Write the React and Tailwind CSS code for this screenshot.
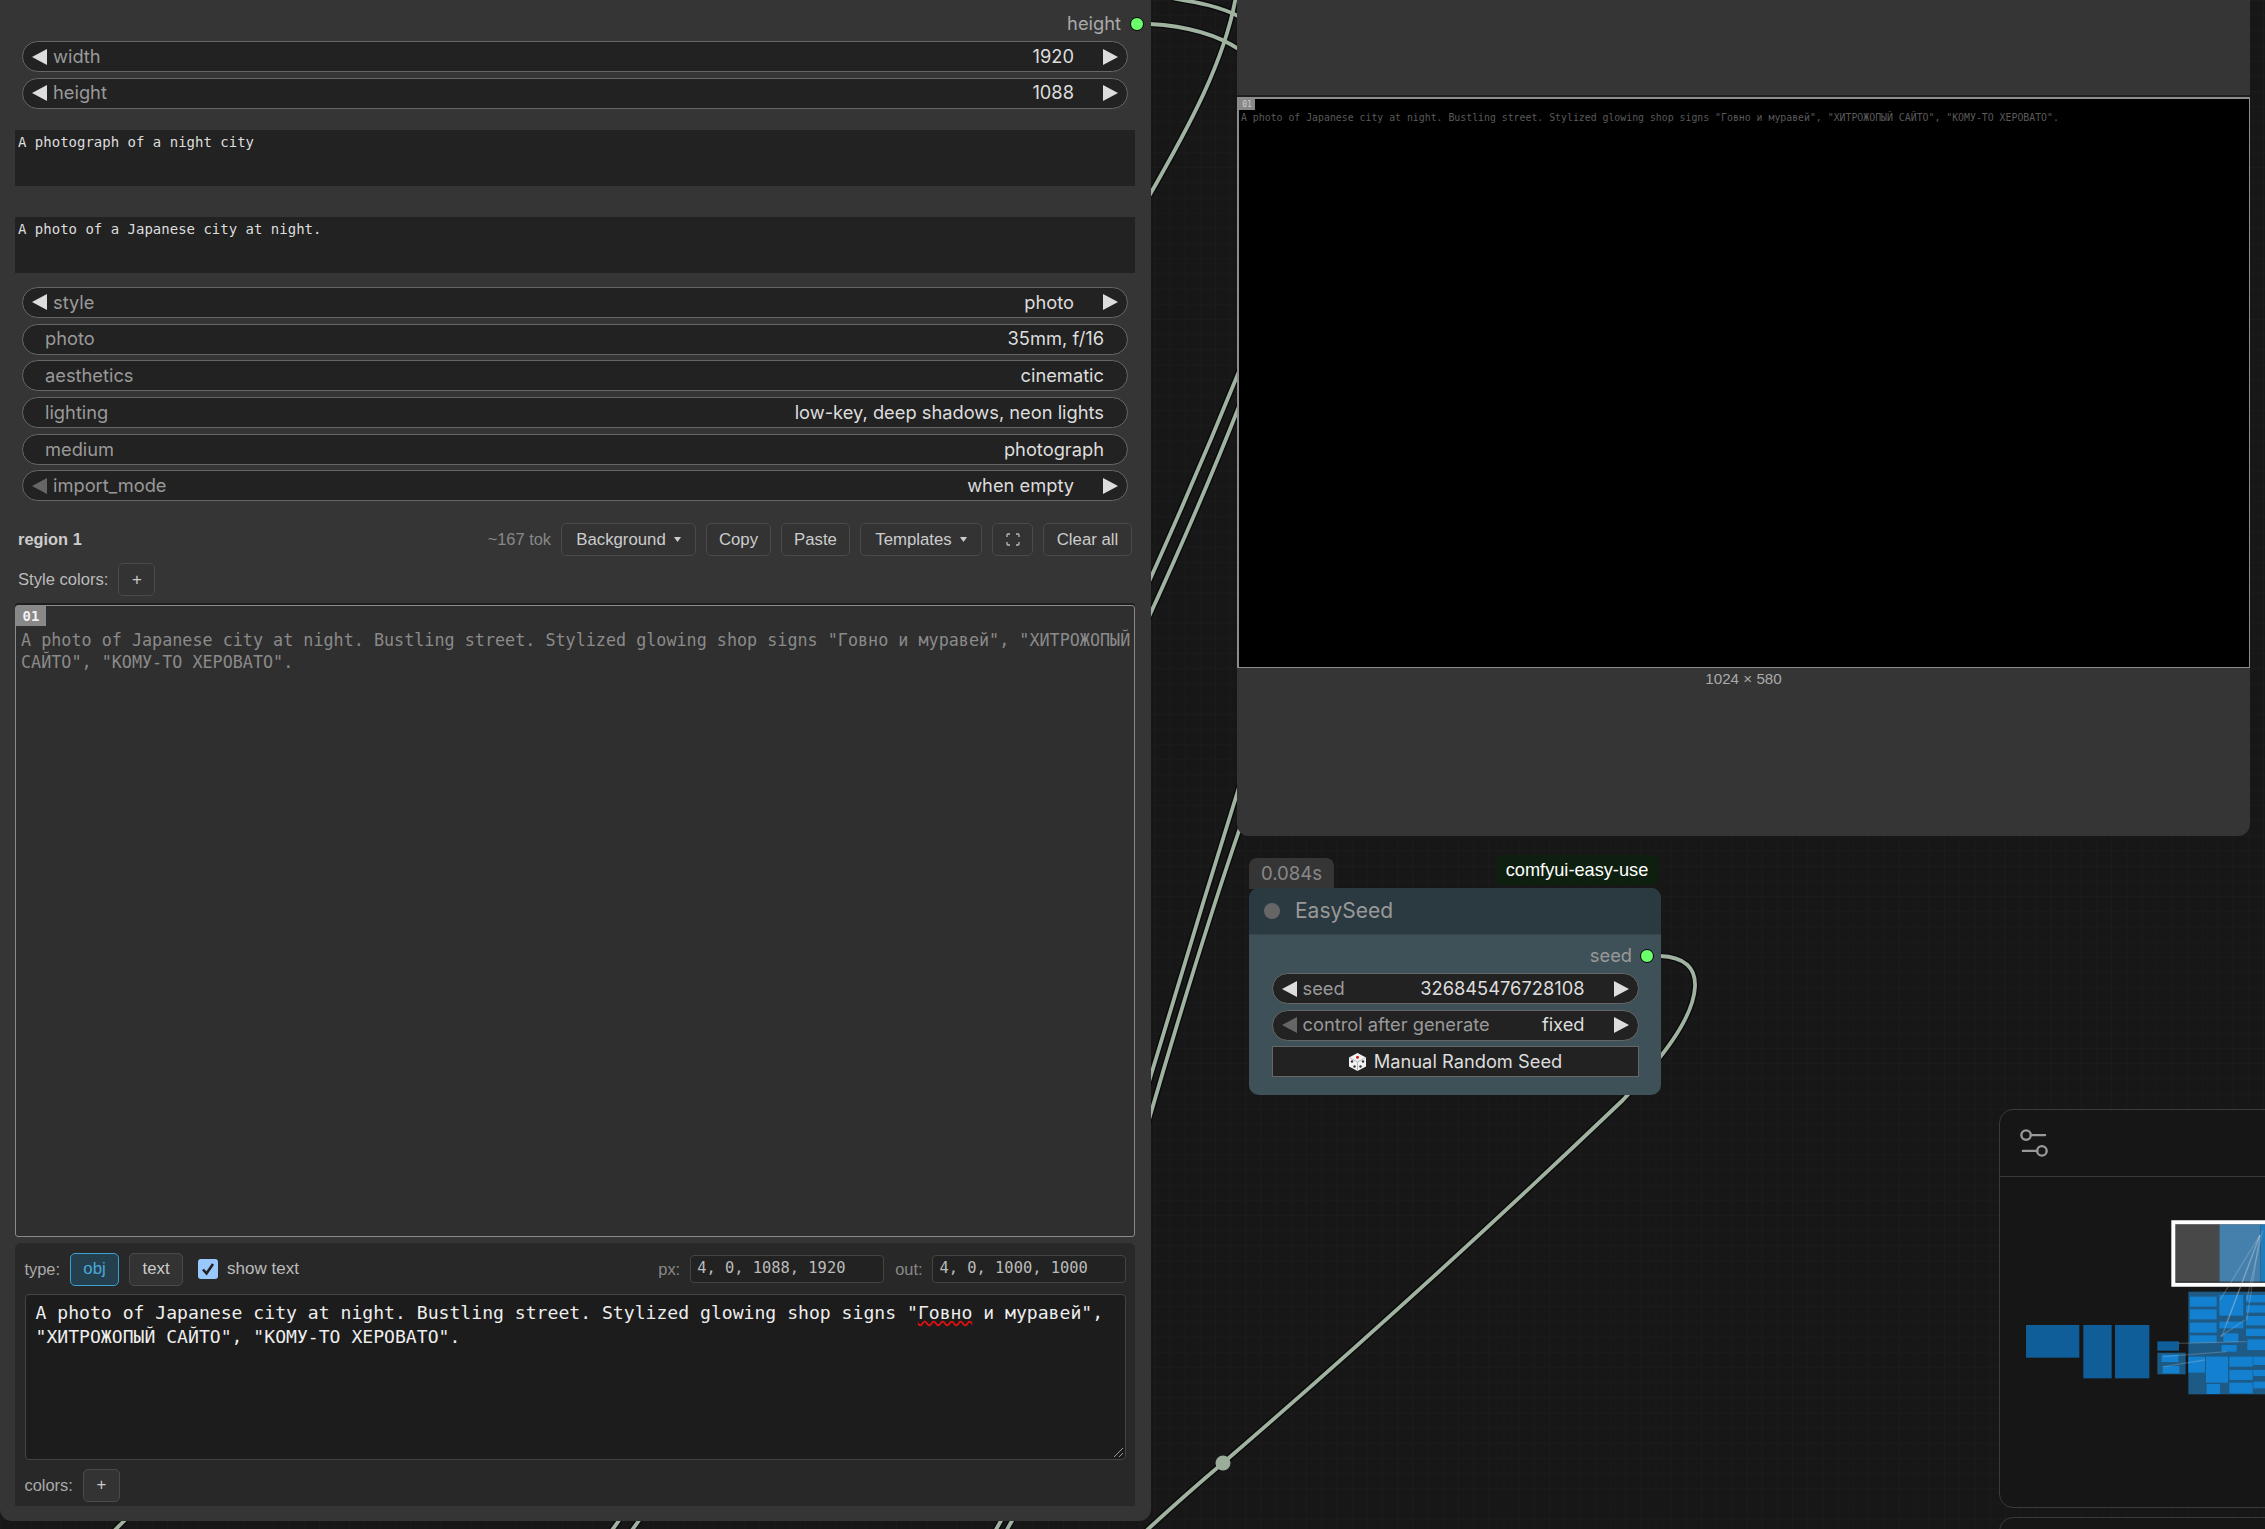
import React from 'react';
import { Settings2 } from 'lucide-react';

const sans = 'font-["Liberation_Sans",Arial,sans-serif]';
const mono = 'font-["DejaVu_Sans_Mono","Liberation_Mono",monospace]';
const inter = 'font-["Inter","Noto_Sans",sans-serif]';

const PROMPT_A = 'A photo of Japanese city at night. Bustling street. Stylized glowing shop signs "Говно и муравей", "ХИТРОЖОПЫЙ';
const PROMPT_B = 'САЙТО", "КОМУ-ТО ХЕРОВАТО".';

const Arrow = ({ dir, dim }) => (
    <svg width="15" height="16" viewBox="0 0 15 16" className="shrink-0">
        <polygon points={dir === 'left' ? '15,0 15,16 0,8' : '0,0 0,16 15,8'} fill={dim ? '#666666' : '#dddddd'} />
    </svg>
);

// widget row used by both nodes
const Row = ({ label, value, arrows = true, dimLeft = false }) => (
    <div className={`${inter} flex items-center h-[31px] shrink-0 rounded-full border-[1.5px] border-[#666666] bg-[#222222] text-[18.3px] ${arrows ? 'px-[9px]' : 'pl-[22px] pr-[23px]'}`}>
        {arrows && <Arrow dir="left" dim={dimLeft} />}
        <span className={`text-[#999999] ${arrows ? 'ml-[6px]' : ''}`}>{label}</span>
        <span className={`ml-auto text-[#dddddd] ${arrows ? 'mr-[29px]' : ''}`}>{value}</span>
        {arrows && <Arrow dir="right" />}
    </div>
);

const OutDot = () => (
    <span className="w-[14px] h-[14px] rounded-full bg-[#6cff6c] border border-black shrink-0" />
);

const Btn = ({ children, className = '' }) => (
    <button className={`flex items-center justify-center h-[33px] rounded-[5px] border-[1.5px] border-[#4a4a4a] bg-[#333333] text-[#cccccc] text-[16.8px] ${className}`}>
        {children}
    </button>
);

const Caret = () => (
    <svg width="7" height="5" viewBox="0 0 7 5" className="ml-[8px]">
        <polygon points="0,0 7,0 3.5,5" fill="#cccccc" />
    </svg>
);

const SmallPrompt = ({ children, className = '' }) => (
    <div className={`${mono} h-[56px] bg-[#222222] pl-[3px] pt-[3px] text-[14px] leading-[18px] text-[#dddddd] ${className}`}>
        {children}
    </div>
);

const Wires = () => {
    const paths = [
        'M1150 24 C1185 26 1215 33 1240 50',
        'M1172 -2 C1195 2 1220 6 1240 17',
        'M1236 -4 C1225 60 1190 125 1148 198',
        'M1148 584 C1170 535 1205 455 1240 369',
        'M1148 619 C1175 560 1210 480 1240 404',
        'M1148 1085 C1170 1010 1210 880 1240 784',
        'M1148 1123 C1175 1030 1215 900 1242 822',
        'M1660 956 C1685 957 1696 968 1695 987 C1693 1020 1660 1060 1623 1100 C1495 1222 1345 1358 1223 1463 C1198 1484 1172 1507 1146 1531',
        'M112 1533 L126 1519',
        'M610 1533 L620 1519',
        'M630 1533 L640 1519',
        'M994 1533 L1002 1519',
        'M1005 1533 L1013 1519',
    ];
    return (
        <svg className="absolute left-0 top-0" width="2265" height="1529" viewBox="0 0 2265 1529" fill="none">
            {paths.map((d) => (
                <path key={d + 'o'} d={d} stroke="#0a0a0a" strokeWidth="6.5" />
            ))}
            {paths.map((d) => (
                <path key={d} d={d} stroke="#a0b2a0" strokeWidth="3.8" />
            ))}
            <circle cx="1223" cy="1463" r="7.5" fill="#9aac9a" />
        </svg>
    );
};

const Dice = () => (
    <svg width="19" height="20" viewBox="0 0 19 20" className="mr-[7px]">
        <polygon points="9.5,1 18,5.5 18,14.5 9.5,19 1,14.5 1,5.5" fill="#f2f2f2" />
        <path d="M1 5.5 L9.5 10 L18 5.5 M9.5 10 V19" stroke="#b9b9b9" strokeWidth="1" fill="none" />
        <circle cx="9.5" cy="5.3" r="1.5" fill="#d02020" />
        <circle cx="4" cy="9.5" r="1.2" fill="#333333" />
        <circle cx="6.5" cy="14.5" r="1.2" fill="#333333" />
        <circle cx="15" cy="9.5" r="1.2" fill="#333333" />
        <circle cx="12.5" cy="14.5" r="1.2" fill="#333333" />
    </svg>
);

const Minimap = () => {
    const dark = [
        [198, 735, 160, 98], [370, 735, 85, 160], [465, 735, 103, 160], [592, 784, 65, 28],
    ];
    const light = [
        [690, 650, 80, 30], [690, 688, 80, 30], [690, 728, 80, 30], [690, 766, 80, 22],
        [778, 645, 72, 62], [778, 725, 72, 20], [790, 760, 45, 26], [785, 795, 45, 20],
        [858, 645, 57, 22], [858, 676, 57, 22], [858, 708, 57, 28], [858, 746, 57, 22], [862, 778, 53, 32],
        [685, 830, 50, 48], [738, 830, 66, 78], [808, 830, 70, 30], [808, 870, 70, 30], [808, 908, 70, 32],
        [880, 830, 35, 25], [880, 870, 35, 18], [880, 905, 35, 20], [740, 912, 40, 30],
        [605, 824, 50, 22], [608, 858, 50, 22],
    ];
    const links = [
        [900, 465, 780, 660], [900, 465, 800, 730], [900, 465, 785, 770], [900, 465, 860, 720], [908, 452, 860, 660],
        [655, 790, 860, 785], [610, 830, 800, 815], [610, 860, 735, 840], [780, 770, 855, 720],
    ];
    return (
        <svg className="absolute left-[1960px] top-[1080px]" width="305" height="449" viewBox="0 0 915 1347">
            {dark.map(([x, y, w, h]) => (
                <rect key={`${x}-${y}`} x={x} y={y} width={w} height={h} fill="#0f5e99" />
            ))}
            <rect x="592" y="818" width="85" height="65" fill="#1c5a86" />
            <rect x="685" y="635" width="230" height="308" fill="#1d5a86" />
            {light.map(([x, y, w, h]) => (
                <rect key={`${x}-${y}`} x={x} y={y} width={w} height={h} fill="#1480d0" />
            ))}
            <rect x="646" y="433" width="132" height="172" fill="#484848" />
            <rect x="778" y="433" width="124" height="172" fill="#4580ad" />
            <rect x="902" y="433" width="13" height="172" fill="#1d7cc0" />
            <path d="M915 427 H640 V614 H915" fill="none" stroke="#ffffff" strokeWidth="12" />
            {links.map(([a, b, c, d]) => (
                <line key={`${a}-${b}-${c}-${d}`} x1={a} y1={b} x2={c} y2={d} stroke="#dddddd" strokeOpacity="0.22" strokeWidth="4" />
            ))}
        </svg>
    );
};

const App = () => {
    return (
        <div className="relative w-[2265px] h-[1529px] overflow-hidden bg-[#171717] bg-[linear-gradient(#1b1b1b_1px,transparent_1px),linear-gradient(90deg,#1b1b1b_1px,transparent_1px)] bg-[size:15.2px_15.2px]">
            <Wires />

            {/* left node */}
            <div className={`${sans} absolute left-0 top-0 w-[1151px] h-[1521px] rounded-b-[12px] bg-[#353535] pl-[15px] pr-[16px] pt-[14px] flex flex-col`}>
                <div className={`${inter} flex items-center justify-end h-[20px] mb-[7px] -mr-[9px] text-[18.3px] text-[#aaaaaa]`}>
                    <span className="mr-[9px]">height</span>
                    <OutDot />
                </div>
                <div className="flex flex-col gap-[5.7px] px-[7px]">
                    <Row label="width" value="1920" />
                    <Row label="height" value="1088" />
                </div>
                <SmallPrompt className="mt-[21.3px]">A photograph of a night city</SmallPrompt>
                <SmallPrompt className="mt-[31px]">A photo of a Japanese city at night.</SmallPrompt>
                <div className="flex flex-col gap-[5.7px] px-[7px] mt-[14px]">
                    <Row label="style" value="photo" />
                    <Row label="photo" value="35mm, f/16" arrows={false} />
                    <Row label="aesthetics" value="cinematic" arrows={false} />
                    <Row label="lighting" value="low-key, deep shadows, neon lights" arrows={false} />
                    <Row label="medium" value="photograph" arrows={false} />
                    <Row label="import_mode" value="when empty" dimLeft />
                </div>

                <div className="flex items-center mt-[22px] h-[33px] pl-[3px] pr-[3px]">
                    <span className="font-bold text-[16.4px] text-[#cccccc] pb-[1px]">region 1</span>
                    <span className="ml-auto text-[16.4px] text-[#888888] mr-[10px] pb-[1px]">~167 tok</span>
                    <div className="flex gap-[10px]">
                        <Btn className="w-[135px]">Background<Caret /></Btn>
                        <Btn className="w-[65px]">Copy</Btn>
                        <Btn className="w-[69px]">Paste</Btn>
                        <Btn className="w-[122px]">Templates<Caret /></Btn>
                        <Btn className="w-[41px]">
                            <svg width="14" height="13" viewBox="0 0 14 13" fill="none" stroke="#bbbbbb" strokeWidth="1.3">
                                <path d="M1 4 V2 Q1 1 2 1 H4 M10 1 H12 Q13 1 13 2 V4 M13 9 V11 Q13 12 12 12 H10 M4 12 H2 Q1 12 1 11 V9" />
                            </svg>
                        </Btn>
                        <Btn className="w-[89px]">Clear all</Btn>
                    </div>
                </div>

                <div className="flex items-center mt-[7px] pl-[3px]">
                    <span className="text-[16.6px] text-[#bbbbbb] mr-[10px] pt-[1px]">Style colors:</span>
                    <Btn className="w-[37px]">+</Btn>
                </div>

                {/* region editor */}
                <div className="relative mt-[8.6px] h-[632px] rounded-[3px] border-[1.5px] border-[#8a8a8a] bg-[#2f2f2f] shadow-[0_-2px_0_#1e1e1e]">
                    <div className={`${mono} w-[30px] h-[20px] bg-[#888888] text-[#f0f0f0] font-bold text-[14px] leading-[20px] text-center`}>01</div>
                    <div className={`${mono} pl-[5px] pt-[4px] text-[16.76px] leading-[21.7px] text-[#8a8a8a] whitespace-pre`}>
                        {PROMPT_A}
                        <br />
                        {PROMPT_B}
                    </div>
                </div>

                {/* region properties */}
                <div className="mt-[6px] h-[263px] rounded-t-[6px] bg-[#282828] px-[9.5px] flex flex-col">
                    <div className="flex items-center mt-[9.5px] h-[33px]">
                        <span className="text-[16.4px] text-[#aaaaaa] mr-[10px]">type:</span>
                        <Btn className="w-[49px] !border-[#3b9fd1] !bg-[#24404f] !text-[#4aa8d8]">obj</Btn>
                        <Btn className="w-[54px] ml-[10px]">text</Btn>
                        <span className="ml-[15px] w-[20px] h-[20px] rounded-[3px] bg-[#99c8ff] flex items-center justify-center">
                            <svg width="14" height="14" viewBox="0 0 14 14" fill="none" stroke="#222222" strokeWidth="2.6">
                                <path d="M2 7.5 L5.5 11.5 L12 2" />
                            </svg>
                        </span>
                        <span className="ml-[9px] text-[17px] text-[#bbbbbb]">show text</span>
                        <span className="ml-auto text-[16.4px] text-[#888888] mr-[10px]">px:</span>
                        <div className={`${mono} w-[194px] h-[28px] rounded-[4px] border-[1.5px] border-[#444444] bg-[#222222] pl-[6px] text-[15.4px] leading-[25px] text-[#bbbbbb]`}>4, 0, 1088, 1920</div>
                        <span className="ml-[11px] text-[16.4px] text-[#888888] mr-[9px]">out:</span>
                        <div className={`${mono} w-[194px] h-[28px] rounded-[4px] border-[1.5px] border-[#444444] bg-[#222222] pl-[7px] text-[15.4px] leading-[25px] text-[#bbbbbb]`}>4, 0, 1000, 1000</div>
                    </div>
                    <div className={`${mono} relative mt-[8.5px] h-[166px] rounded-[4px] border-[1.5px] border-[#444444] bg-[#1c1c1c] pl-[10px] pt-[6px] text-[18.1px] leading-[24px] text-[#eeeeee] whitespace-pre`}>
                        A photo of Japanese city at night. Bustling street. Stylized glowing shop signs "<span className="underline decoration-wavy decoration-[#e01010]">Говно</span> и муравей",
                        <br />
                        "ХИТРОЖОПЫЙ САЙТО", "КОМУ-ТО ХЕРОВАТО".
                        <svg className="absolute right-[1px] bottom-[1px]" width="11" height="11" viewBox="0 0 11 11" stroke="#999999" strokeWidth="1">
                            <path d="M1 10 L10 1 M6 10 L10 6" />
                        </svg>
                    </div>
                    <div className="flex items-center mt-[8.5px]">
                        <span className="text-[16.4px] text-[#aaaaaa] mr-[10px]">colors:</span>
                        <Btn className="w-[37px]">+</Btn>
                    </div>
                </div>
            </div>

            {/* preview node */}
            <div className="absolute left-[1237px] top-0 w-[1013px] h-[836px] rounded-b-[12px] bg-[#353535] flex flex-col">
                <div className="h-[97px] shrink-0 border-b-2 border-[#1e1e1e]" />
                <div className="relative h-[571px] shrink-0 bg-black border-t-2 border-l-2 border-b border-r border-[#8c8c8c]">
                    <div className={`${mono} w-[16px] h-[11px] bg-[#888888] text-[#cccccc] text-[8px] leading-[11px] text-center`}>01</div>
                    <div className={`${mono} pl-[2px] pt-[2px] text-[9.85px] leading-[12px] text-[#5a5a5a] whitespace-pre`}>
                        {PROMPT_A} {PROMPT_B}
                    </div>
                </div>
                <div className={`${sans} text-center text-[15.2px] leading-[20px] mt-[1px] text-[#aaaaaa]`}>1024 × 580</div>
            </div>

            {/* EasySeed node */}
            <div className="absolute left-[1249px] top-[858px] w-[85px] h-[31px] rounded-t-[8px] bg-[#353535] flex items-center justify-center">
                <span className={`${inter} text-[18.6px] text-[#888888]`}>0.084s</span>
            </div>
            <div className="absolute left-[1496px] top-[855px] w-[162px] h-[30px] rounded-[6px] bg-[#0f1f0f] flex items-center justify-center">
                <span className={`${sans} text-[18.2px] text-white pt-[1px]`}>comfyui-easy-use</span>
            </div>
            <div className={`${inter} absolute left-[1249px] top-[888px] w-[412px] h-[207px] rounded-[10px] bg-[#3e5158] flex flex-col`}>
                <div className="h-[47px] shrink-0 rounded-t-[10px] bg-[#2b3a40] flex items-center pl-[15px] border-b border-[#36464d]">
                    <span className="w-[16px] h-[16px] rounded-full bg-[#666666]" />
                    <span className="ml-[15px] text-[21px] text-[#999999]">EasySeed</span>
                </div>
                <div className="flex items-center justify-end h-[20px] mt-[11px] pr-[7px] text-[18.3px] text-[#999999]">
                    <span className="mr-[8px]">seed</span>
                    <OutDot />
                </div>
                <div className="flex flex-col gap-[5.7px] px-[22.5px] mt-[7px]">
                    <Row label="seed" value="326845476728108" />
                    <Row label="control after generate" value="fixed" dimLeft />
                    <div className="h-[31px] flex items-center justify-center border-[1.5px] border-[#666666] bg-[#222222] text-[18.3px] text-[#dddddd]">
                        <Dice />
                        Manual Random Seed
                    </div>
                </div>
            </div>

            {/* minimap panel */}
            <div className="absolute left-[1999px] top-[1109px] w-[400px] h-[399px] rounded-[14px] border-[1.5px] border-[#3a3a3e] bg-[#161616]">
                <div className="h-[67px] border-b-[1.5px] border-[#3a3a3e] flex items-center pl-[15px]">
                    <Settings2 size={38} strokeWidth={1.5} color="#999999" />
                </div>
            </div>
            <div className="absolute left-[1999px] top-[1517px] w-[400px] h-[40px] rounded-[14px] border-[1.5px] border-[#3a3a3e] bg-[#161616]" />
            <Minimap />
        </div>
    );
};

export default App;
